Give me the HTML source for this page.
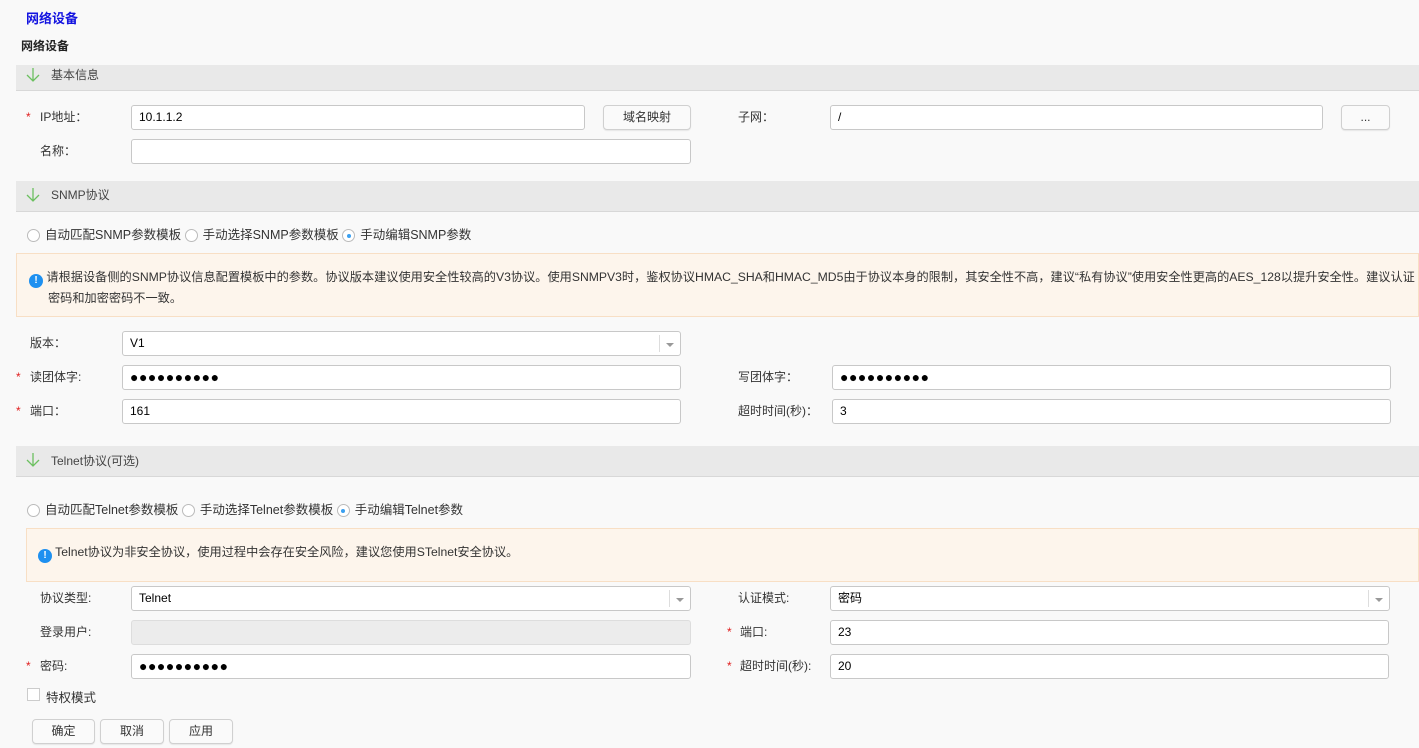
<!DOCTYPE html>
<html><head><meta charset="utf-8"><style>
body{margin:0;width:1419px;height:748px;background:#f9f9f9;font-family:"Liberation Sans","Noto Sans CJK SC",sans-serif;font-size:12px;color:#333;position:relative;overflow:hidden}
.a{position:absolute;white-space:nowrap}
.in{position:absolute;border:1px solid #c8c8c8;border-radius:3px;background:#fff;box-sizing:border-box;height:25px;line-height:23px;padding-left:7px;font-size:12px;color:#000}
.btn{position:absolute;height:25px;box-sizing:border-box;border:1px solid #d0d0d0;border-radius:4px;background:#fafafa;text-align:center;line-height:23px;box-shadow:0 1px 1px rgba(0,0,0,.08);color:#333}
.bar{position:absolute;left:16px;right:0;background:#e9e9e9;border-bottom:1px solid #d8d8d8}
.bar span{position:absolute;left:35px;color:#444}
.bar svg{position:absolute;left:9px}
.st{color:#e02020}
.r{display:inline-block;width:13px;height:13px;border:1px solid #bbb;border-radius:50%;background:#fff;vertical-align:-3px;margin-right:5px;box-sizing:border-box;position:relative}
.r.on::after{content:"";position:absolute;left:3.5px;top:3.5px;width:4px;height:4px;border-radius:50%;background:#3ba0f0}
.rd{font-size:12.5px}
.warn{position:absolute;right:0;background:#fdf5ec;border:1px solid #f8dfc5;box-sizing:border-box}
.ic{display:inline-block;width:14px;height:14px;border-radius:50%;background:#1e90f0;color:#fff;font-weight:bold;font-size:10px;text-align:center;line-height:14px;vertical-align:-2px}
.dd{position:absolute;right:0;top:3px;bottom:3px;width:20px;border-left:1px solid #ddd}
.dd::after{content:"";position:absolute;left:6px;top:8px;border:4px solid transparent;border-top:4px solid #999}
.dots{letter-spacing:0.5px;font-size:14px;font-weight:bold}
</style></head><body>
<div class="a" style="left:26px;top:8px;color:#1414e0;font-weight:bold;font-size:13px">网络设备</div>
<div class="a" style="left:21px;top:37px;font-weight:bold;font-size:12px;color:#222">网络设备</div>

<div class="bar" style="top:65px;height:25px"><svg style="top:2px" width="16" height="16" viewBox="0 0 16 16"><path d="M8 1v13M2 8l6 6 6-6" stroke="#6cc060" stroke-width="1.3" fill="none"/></svg><span style="top:1px">基本信息</span></div>

<div class="a st" style="left:26px;top:110px">*</div><div class="a" style="left:40px;top:108px">IP地址：</div>
<div class="in" style="left:131px;top:105px;width:454px">10.1.1.2</div>
<div class="btn" style="left:603px;top:105px;width:88px">域名映射</div>
<div class="a" style="left:738px;top:108px">子网：</div>
<div class="in" style="left:830px;top:105px;width:493px">/</div>
<div class="btn" style="left:1341px;top:105px;width:49px">...</div>
<div class="a" style="left:40px;top:142px">名称：</div>
<div class="in" style="left:131px;top:139px;width:560px"></div>

<div class="bar" style="top:181px;height:30px"><svg style="top:6px" width="16" height="16" viewBox="0 0 16 16"><path d="M8 1v13M2 8l6 6 6-6" stroke="#6cc060" stroke-width="1.3" fill="none"/></svg><span style="top:5px">SNMP协议</span></div>
<div class="a rd" style="left:27px;top:224px"><span class="r"></span>自动匹配SNMP参数模板 <span class="r"></span>手动选择SNMP参数模板 <span class="r on"></span>手动编辑SNMP参数</div>
<div class="warn" style="left:16px;top:253px;height:64px"><div class="a" style="left:12px;top:13px;line-height:21px;font-size:12.2px"><span class="ic">!</span> 请根据设备侧的SNMP协议信息配置模板中的参数。协议版本建议使用安全性较高的V3协议。使用SNMPV3时，鉴权协议HMAC_SHA和HMAC_MD5由于协议本身的限制，其安全性不高，建议“私有协议”使用安全性更高的AES_128以提升安全性。建议认证<br><span style="padding-left:19px">密码和加密密码不一致。</span></div></div>

<div class="a" style="left:30px;top:334px">版本：</div>
<div class="in" style="left:122px;top:331px;width:559px">V1<div class="dd"></div></div>
<div class="a st" style="left:16px;top:370px">*</div><div class="a" style="left:30px;top:368px">读团体字:</div>
<div class="in dots" style="left:122px;top:365px;width:559px">●●●●●●●●●●</div>
<div class="a" style="left:738px;top:368px">写团体字：</div>
<div class="in dots" style="left:832px;top:365px;width:559px">●●●●●●●●●●</div>
<div class="a st" style="left:16px;top:404px">*</div><div class="a" style="left:30px;top:402px">端口：</div>
<div class="in" style="left:122px;top:399px;width:559px">161</div>
<div class="a" style="left:738px;top:402px">超时时间(秒)：</div>
<div class="in" style="left:832px;top:399px;width:559px">3</div>

<div class="bar" style="top:446px;height:30px"><svg style="top:6px" width="16" height="16" viewBox="0 0 16 16"><path d="M8 1v13M2 8l6 6 6-6" stroke="#6cc060" stroke-width="1.3" fill="none"/></svg><span style="top:6px">Telnet协议(可选)</span></div>
<div class="a rd" style="left:27px;top:499px"><span class="r"></span>自动匹配Telnet参数模板 <span class="r"></span>手动选择Telnet参数模板 <span class="r on"></span>手动编辑Telnet参数</div>
<div class="warn" style="left:26px;top:528px;height:54px"><div class="a" style="left:11px;top:13px;font-size:12.2px"><span class="ic">!</span> Telnet协议为非安全协议，使用过程中会存在安全风险，建议您使用STelnet安全协议。</div></div>

<div class="a" style="left:40px;top:589px">协议类型:</div>
<div class="in" style="left:131px;top:586px;width:560px">Telnet<div class="dd"></div></div>
<div class="a" style="left:738px;top:589px">认证模式:</div>
<div class="in" style="left:830px;top:586px;width:560px">密码<div class="dd"></div></div>
<div class="a" style="left:40px;top:623px">登录用户:</div>
<div class="in" style="left:131px;top:620px;width:560px;background:#ececec;border-color:#ddd"></div>
<div class="a st" style="left:727px;top:625px">*</div><div class="a" style="left:740px;top:623px">端口:</div>
<div class="in" style="left:830px;top:620px;width:559px">23</div>
<div class="a st" style="left:26px;top:659px">*</div><div class="a" style="left:40px;top:657px">密码:</div>
<div class="in dots" style="left:131px;top:654px;width:560px">●●●●●●●●●●</div>
<div class="a st" style="left:727px;top:659px">*</div><div class="a" style="left:740px;top:657px">超时时间(秒):</div>
<div class="in" style="left:830px;top:654px;width:559px">20</div>
<div class="a" style="left:27px;top:688px;width:13px;height:13px;border:1px solid #ccc;background:#fff;box-sizing:border-box"></div>
<div class="a" style="left:46px;top:687px;font-size:12.5px">特权模式</div>
<div class="btn" style="left:32px;top:719px;width:63px">确定</div>
<div class="btn" style="left:100px;top:719px;width:64px">取消</div>
<div class="btn" style="left:169px;top:719px;width:64px">应用</div>
</body></html>
